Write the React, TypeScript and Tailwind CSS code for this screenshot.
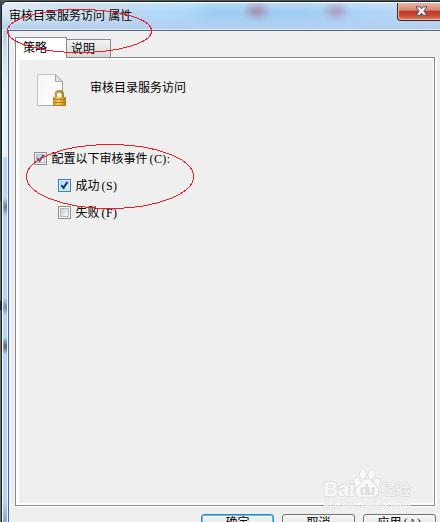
type CheckItemProps = {
  label: string;
  accel: string;
  checked?: boolean;
  active?: boolean;
  className?: string;
};

function CheckItem({ label, accel, checked, active, className = "" }: CheckItemProps) {
  return (
    <div className={`flex h-[13px] items-center ${className}`}>
      <div
        className={`size-[13px] shrink-0 border p-px ${
          active ? "border-[#3c7fb1] bg-[#def4fd]" : "border-[#8e8f8f] bg-[#f4f4f4]"
        }`}
      >
        <div
          className={`size-[9px] border bg-linear-to-br ${
            active
              ? "border-[#a5d8f4] from-[#b3dff8] to-[#f0faff]"
              : "border-[#b5bac0] from-[#cbcfd5] to-[#f6f6f6]"
          }`}
        >
          {checked && (
            <svg viewBox="0 0 7 7" className="size-[7px] overflow-visible">
              <path
                d="M0.4 3.2 L2.6 5.8 L6.4 0"
                fill="none"
                stroke={active ? "#12246f" : "#474f91"}
                strokeWidth="1.9"
              />
            </svg>
          )}
        </div>
      </div>
      <span className="ml-[4.5px] whitespace-pre">{label}</span>
      <span className="ml-[2px] font-['Liberation_Serif','Noto_Sans_CJK_SC',serif] tracking-[0.4px]">
        {accel}
      </span>
    </div>
  );
}

function LockedFileIcon() {
  return (
    <svg viewBox="0 0 30 33" className="h-[33px] w-[30px] shrink-0">
      <defs>
        <linearGradient id="paper" x1="0" y1="0" x2="1" y2="1">
          <stop offset="0" stopColor="#f5f5f5" />
          <stop offset="1" stopColor="#ffffff" />
        </linearGradient>
        <linearGradient id="brass" x1="0" y1="0" x2="1" y2="0">
          <stop offset="0" stopColor="#c58c17" />
          <stop offset="0.4" stopColor="#f2cf5c" />
          <stop offset="1" stopColor="#b07808" />
        </linearGradient>
      </defs>
      <path d="M0.5 0.5 H18.5 L25.5 7.5 V31.5 H0.5 Z" fill="url(#paper)" stroke="#c5c5c5" />
      <path d="M1 31.5 H17" stroke="#a9a9a9" />
      <path d="M25.5 8 V18" stroke="#9c9c9c" />
      <path d="M18.5 0.5 V7.5 H25.5 Z" fill="#e4e4e4" stroke="#a5a5a5" />
      <path d="M19 24 V20 Q19 17.2 22.3 17.2 Q25.8 17.2 25.8 20 V24" fill="none" stroke="#b08325" strokeWidth="2.4" />
      <path d="M19 23 V20 Q19 17.2 22.3 17.2" fill="none" stroke="#d8c28a" strokeWidth="0.8" />
      <rect x="16" y="23" width="13" height="9" fill="url(#brass)" />
      <path d="M16 25.5 H29 M16 28.5 H29" stroke="#a8720b" strokeWidth="0.8" />
      <path d="M16 31.5 H29" stroke="#b87d10" />
    </svg>
  );
}

function Watermark() {
  return (
    <svg
      viewBox="0 0 90 46"
      className="absolute top-[467px] left-[322px] h-[46px] w-[90px]"
      fill="#f8f8f8"
      stroke="#dfdfdf"
      strokeWidth="1.8"
      strokeLinejoin="round"
      paintOrder="stroke"
    >
      <text x="1.5" y="28.5" fontSize="20" fontWeight="700" fontFamily="Liberation Sans, sans-serif" textLength="31">
        Bai
      </text>
      <ellipse cx="35.3" cy="14.5" rx="3" ry="4" transform="rotate(-18 35.3 14.5)" />
      <ellipse cx="41" cy="7" rx="3" ry="4.4" />
      <ellipse cx="49.5" cy="7.4" rx="3" ry="4.4" transform="rotate(10 49.5 7.4)" />
      <ellipse cx="54.8" cy="15.5" rx="3" ry="4" transform="rotate(18 54.8 15.5)" />
      <path d="M45 12.5 C40.5 12.5 39.5 17 36.5 19 C32.5 22.5 33 29.8 39 29.8 H51 C57 29.8 58 22.5 53.5 19 C50.5 17 49.5 12.5 45 12.5 Z" />
      <text x="38" y="28" fontSize="14" fontWeight="700" fontFamily="Liberation Sans, sans-serif" fill="#dcdcdc" stroke="none" textLength="15">
        du
      </text>
      <text x="58.5" y="28" fontSize="15" fontFamily="Noto Sans CJK SC, sans-serif" fontWeight="400" fill="#f6f6f6">
        经验
      </text>
      <text x="2" y="40" fontSize="10" fontFamily="Liberation Sans, sans-serif" fill="#f6f6f6" stroke="#e6e6e6" strokeWidth="1" textLength="86">
        jingyan.baidu.com
      </text>
    </svg>
  );
}

const buttons = [
  { label: "确定", primary: true },
  { label: "取消", primary: false },
  { label: "应用", accel: "(A)", primary: false },
];

export default function App() {
  return (
    <div className="relative flex h-[522px] w-[440px] overflow-hidden bg-[#55595f] pt-px font-['Liberation_Sans','Noto_Sans_CJK_SC',sans-serif] text-[12px] leading-[14px] text-black">
      {/* desktop strip behind the window */}
      <div className="flex w-px shrink-0 flex-col bg-[#6c6f75]">
        <div className="h-[200px] bg-[#41464e]" />
        <div className="mt-[100px] h-[9px] bg-[#1c2155]" />
        <div className="mt-[31px] h-[9px] bg-[#93602c]" />
      </div>

      <div className="flex min-w-0 flex-1 flex-col rounded-tl-[6px] border-t border-l border-[#17202a] bg-white pt-px">
        {/* title bar */}
        <div className="flex h-[27px] shrink-0 items-start justify-between overflow-hidden rounded-tl-[5px] border-b border-[#dceafa] bg-[linear-gradient(180deg,#ffffff44_0%,#ffffff00_35%,#b5d0ef88_70%,#b5d0ef_100%),radial-gradient(ellipse_15px_13px_at_255px_8px,#a3618680_20%,#a3618600),radial-gradient(ellipse_15px_13px_at_334px_8px,#a3618666_20%,#a3618600),linear-gradient(90deg,#dbeaf6_0,#c3d9ec_65px,#bbd5ec_125px,#b0dbf8_150px,#abd9f8_185px,#9bcdf1_210px,#9fcdf2_300px,#add4f8_360px,#bcd8f3_438px)]">
          <div className="mt-[6px] ml-[7px] whitespace-pre [text-shadow:0_0_5px_#ffffffcc]">审核目录服务访问 属性</div>
          <div className="flex h-[18px] w-[43px] items-center justify-center rounded-bl-[4px] border-b border-l border-[#43232a] bg-[linear-gradient(180deg,#e8b5a8_0%,#d98772_42%,#bd3926_48%,#c74b31_75%,#df8b70_100%)] shadow-[inset_1px_-1px_0_#eeb5a5]">
            <svg viewBox="0 0 13 10" className="mr-[-5px] mb-px h-[10px] w-[13px]">
              <path
                d="M1 0.8 H4.8 L6.5 2.9 L8.2 0.8 H12 L8.8 5 L12 9.2 H8.2 L6.5 7.1 L4.8 9.2 H1 L4.2 5 Z"
                fill="#f7f7f7"
                stroke="#4b506c"
              />
            </svg>
          </div>
        </div>

        <div className="flex min-h-0 flex-1">
          {/* glass frame on the left */}
          <div className="flex w-[6px] shrink-0 border-r border-[#eef6ff]">
            <div className="ml-px flex-1 bg-[radial-gradient(ellipse_6px_9px_at_3px_177px,#40617fcc,#40617f00),radial-gradient(ellipse_6px_9px_at_3px_277px,#40617faa,#40617f00),radial-gradient(ellipse_6px_9px_at_3px_316px,#304b66dd,#304b6600),linear-gradient(180deg,#b9cfe6_0,#cfe1f3_30px,#e8f2fc_60px,#e8f2fc_126px,#b3d7fc_128px,#b3d7fc_470px,#86acd5_492px)]" />
          </div>

          <div className="flex min-w-0 flex-1 flex-col border-t border-l border-[#55687f] bg-[#efefef] pl-[6px]">
            {/* tabs */}
            <div className="flex h-[26px] shrink-0 items-end">
              <div className="z-10 mb-[-1px] h-[21px] w-[52px] shrink-0 border border-b-0 border-[#888b94] bg-white pt-[3px] pl-[7px]">
                策略
              </div>
              <div className="h-[18px] w-[44px] border border-b-0 border-l-0 border-[#888b94] bg-linear-to-b from-[#f3f3f3] to-[#d8d8d8] pt-[2px] pl-[4px]">
                说明
              </div>
            </div>

            <div className="h-[449px] w-[420px] shrink-0 border border-[#888997] bg-white pt-[2px] pr-px pb-[2px] pl-[3px] shadow-[2px_1px_0_#ffffff]">
              <div className="flex h-full flex-col bg-[#efefef]">
                <div className="flex pt-[14px] pl-[18px]">
                  <LockedFileIcon />
                  <span className="mt-[7px] ml-[23px]">审核目录服务访问</span>
                </div>
                <CheckItem label="配置以下审核事件" accel="(C):" checked className="mt-[45px] ml-[15px]" />
                <CheckItem label="成功" accel="(S)" checked active className="mt-[14px] ml-[39px]" />
                <CheckItem label="失败" accel="(F)" className="mt-[14px] ml-[39px]" />
              </div>
            </div>

            <div className="mt-[8px] ml-[186px] flex shrink-0 gap-[8px]">
              {buttons.map((button) => (
                <div
                  key={button.label}
                  className={`h-[22px] w-[73px] shrink-0 rounded-[3px] border bg-linear-to-b from-[#f4f4f4] to-[#dddddd] pt-[1px] text-center ${
                    button.primary
                      ? "border-[#3c7fb1] shadow-[inset_0_0_0_1px_#48cbf3]"
                      : "border-[#707070] shadow-[inset_0_0_0_1px_#fafafa]"
                  }`}
                >
                  {button.label}
                  {button.accel && (
                    <span className="ml-[2px] font-['Liberation_Serif',serif] tracking-[0.4px]">
                      {button.accel}
                    </span>
                  )}
                </div>
              ))}
            </div>
          </div>
        </div>
      </div>

      <Watermark />

      {/* red marker circles */}
      <svg
        viewBox="0 0 440 522"
        className="pointer-events-none absolute inset-0 z-20 h-[522px] w-[440px]"
        fill="none"
        stroke="#ed1c24"
        shapeRendering="crispEdges"
      >
        <ellipse cx="79.5" cy="31" rx="72" ry="21.5" />
        <ellipse cx="110" cy="176.5" rx="83.5" ry="32" />
      </svg>
    </div>
  );
}
